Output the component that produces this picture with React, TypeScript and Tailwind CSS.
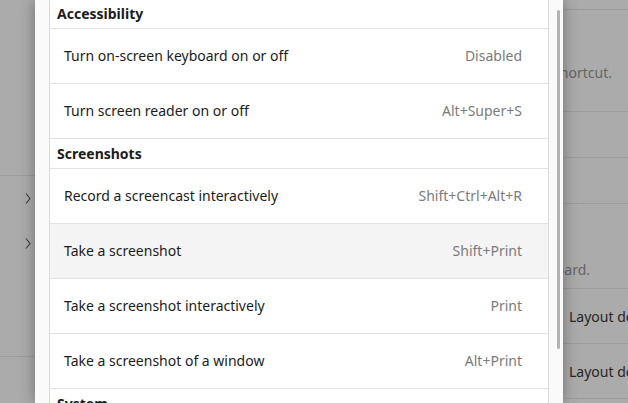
import { Fragment } from "react";

type Row = { label: string; keys: string; hover?: boolean };
type Group = { title: string; rows: Row[] };

const groups: Group[] = [
  {
    title: "Accessibility",
    rows: [
      { label: "Turn on-screen keyboard on or off", keys: "Disabled" },
      { label: "Turn screen reader on or off", keys: "Alt+Super+S" },
    ],
  },
  {
    title: "Screenshots",
    rows: [
      { label: "Record a screencast interactively", keys: "Shift+Ctrl+Alt+R" },
      { label: "Take a screenshot", keys: "Shift+Print", hover: true },
      { label: "Take a screenshot interactively", keys: "Print" },
      { label: "Take a screenshot of a window", keys: "Alt+Print" },
    ],
  },
  { title: "System", rows: [] },
];

const Chevron = () => (
  <svg width="6" height="11" viewBox="0 0 6 11" fill="none">
    <path d="M1 0.5 L5 5.5 L1 10.5" stroke="#3c3c3c" strokeWidth="1.1" />
  </svg>
);

export default function App() {
  return (
    <div
      className="relative h-[403px] w-[628px] overflow-hidden bg-[#ababab] text-[14px]"
      style={{ fontFamily: '"Noto Sans", sans-serif' }}
    >
      {/* settings window underneath, dimmed */}
      <div className="flex h-full">
        <div className="w-[300px] shrink-0">
          <div className="h-[176px] border-b border-[#9c9c9c]" />
          <div className="flex h-[45px] items-center justify-start pl-[25px]">
            <Chevron />
          </div>
          <div className="flex h-[45px] items-center justify-start pl-[25px]">
            <Chevron />
          </div>
          <div className="h-[91px] border-b border-[#9c9c9c]" />
        </div>
        <div className="min-w-0 flex-1 overflow-hidden whitespace-nowrap">
          <div className="h-[10px] border-b border-[#9c9c9c]" />
          <div className="flex h-[102px] items-end justify-end border-b border-[#9c9c9c] pb-[28px] pr-[16px] text-[#656565]">
            Press Esc to cancel the shortcut.
          </div>
          <div className="h-[46px] border-b border-[#9c9c9c]" />
          <div className="h-[46px] border-b border-[#9c9c9c]" />
          <div className="flex h-[85px] items-end justify-end border-b border-[#9c9c9c] pb-[8px] pr-[38px] text-[#656565]">
            Type on the keyboard.
          </div>
          <div className="flex h-[55px] items-center border-b border-[#9c9c9c] pl-[269px] text-[#262626]">
            Layout default
          </div>
          <div className="flex h-[55px] items-center border-b border-[#9c9c9c] pl-[269px] text-[#262626]">
            Layout default
          </div>
        </div>
      </div>

      {/* dialog */}
      <div className="absolute left-[35px] top-0 h-full w-[528px] bg-[#fafafa] px-[14px] shadow-[0_0_14px_rgba(0,0,0,0.35)]">
        <div className="-mt-[2px] border-x border-[#dadada] bg-white">
          {groups.map((g, gi) => (
            <Fragment key={g.title}>
              <div
                className={`flex h-[30px] items-center bg-white pl-[7px] font-bold text-[#1c1c1c] ${
                  gi > 0 ? "border-t border-[#e2e2e2]" : ""
                }`}
              >
                {g.title}
              </div>
              {g.rows.map((r) => (
                <div
                  key={r.label}
                  className={`flex h-[55px] items-center justify-between border-t border-[#e2e2e2] pb-[2px] pl-[14px] pr-[26px] ${
                    r.hover ? "bg-[#f4f4f4]" : "bg-white"
                  }`}
                >
                  <span className="text-[#1c1c1c]">{r.label}</span>
                  <span className="text-[#7b7b7b]">{r.keys}</span>
                </div>
              ))}
            </Fragment>
          ))}
        </div>
        {/* overlay scrollbar */}
        <div className="absolute left-[522px] top-[10px] h-[339px] w-[3px] rounded-full bg-[#b3b3b3]" />
      </div>
    </div>
  );
}
